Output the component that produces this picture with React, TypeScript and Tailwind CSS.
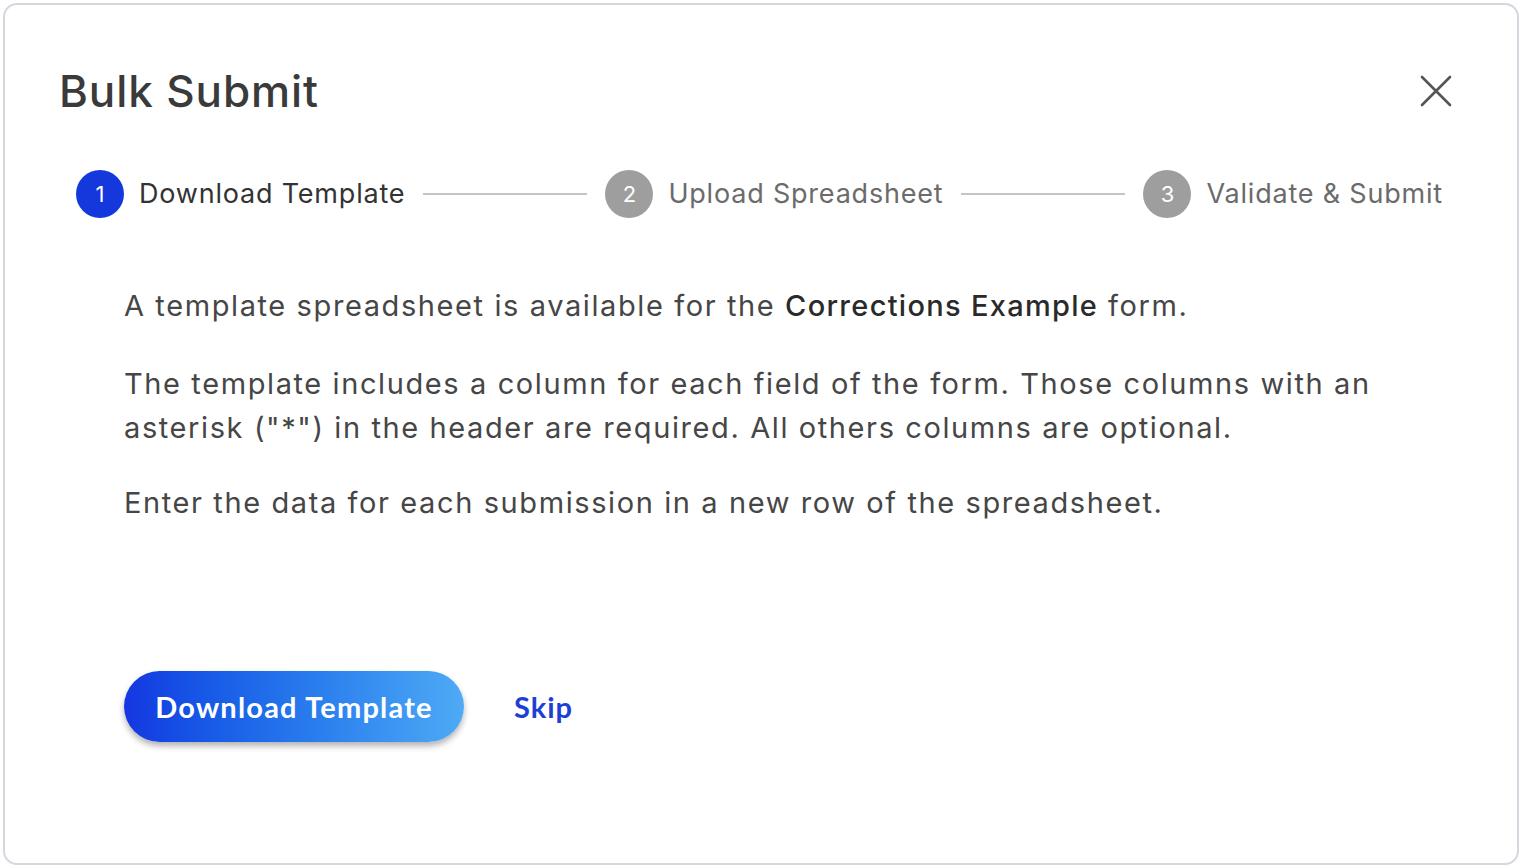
import React from "react";

function Step({ n, label, active }: { n: number; label: string; active?: boolean }) {
  return (
    <div className="flex items-center gap-[15px] shrink-0">
      <div
        className={
          "w-[48px] h-[48px] rounded-full flex items-center justify-center text-[22px] text-white " +
          (active ? "bg-[#1438dc]" : "bg-[#9e9e9e]")
        }
      >
        {n}
      </div>
      <span className={"text-[27px] tracking-[0.8px] " + (active ? "text-[#333333]" : "text-[#6b6b6b]")}>{label}</span>
    </div>
  );
}

export default function App() {
  return (
    <div className="w-[1522px] h-[868px] bg-white p-[3px]" style={{ fontFamily: "Inter, Roboto, sans-serif" }}>
      <div className="h-[862px] border-2 border-[#d3d8de] rounded-[14px] bg-white relative flex flex-col pl-[54px] pr-[58px]">
        <div className="flex items-center justify-between pt-[58px]">
          <h1 className="text-[44px] leading-[56px] font-medium text-[#3a3a3a] tracking-[0.9px]">Bulk Submit</h1>
          <button className="w-[40px] h-[40px] flex items-center justify-center text-[#555] mr-[3px]">
            <svg width="32" height="32" viewBox="0 0 32 32" fill="none" stroke="currentColor" strokeWidth="2.6" strokeLinecap="round">
              <path d="M2 2 L30 30 M30 2 L2 30" />
            </svg>
          </button>
        </div>
        <div className="flex items-center mt-[51px] pl-[17px] pr-[16px]">
          <Step n={1} label="Download Template" active />
          <div className="flex-1 h-[2px] bg-[#c4c4c4] mx-[18px]" />
          <Step n={2} label="Upload Spreadsheet" />
          <div className="flex-1 h-[2px] bg-[#c4c4c4] mx-[18px]" />
          <Step n={3} label="Validate & Submit" />
        </div>
        <div className="pl-[65px] mt-[66px] text-[29px] leading-[44px] tracking-[1.6px] text-[#464646] flex flex-col">
          <p className="mb-[34px]">
            A template spreadsheet is available for the{" "}
            <span className="font-medium text-[#2a2a2a] tracking-[1.3px]">Corrections Example</span> form.
          </p>
          <p className="mb-[31px]">
            The template includes a column for each field of the form. Those columns with an
            <br />
            asterisk ("*") in the header are required. All others columns are optional.
          </p>
          <p>Enter the data for each submission in a new row of the spreadsheet.</p>
        </div>
        <div className="pl-[65px] mt-[146px] flex items-center gap-[50px]">
          <button
            className="h-[71px] w-[340px] rounded-full text-white text-[29px] font-bold bg-gradient-to-r from-[#1636e0] to-[#4eaaf5] shadow-[0_4px_6px_rgba(0,0,0,0.3)]"
            style={{ fontFamily: "Lato, sans-serif", letterSpacing: "1.2px" }}
          >
            Download Template
          </button>
          <span className="text-[29px] font-bold text-[#1d3fd6]" style={{ fontFamily: "Lato, sans-serif", letterSpacing: "1px" }}>
            Skip
          </span>
        </div>
      </div>
    </div>
  );
}
